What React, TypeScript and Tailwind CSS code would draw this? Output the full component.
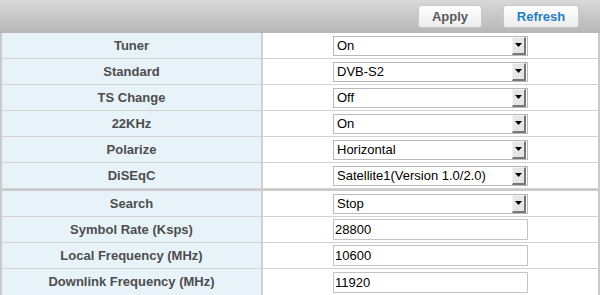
import React from 'react';

type Row = { label: string; value: string; kind: 'select' | 'input' };

const topRows: Row[] = [
  { label: 'Tuner', value: 'On', kind: 'select' },
  { label: 'Standard', value: 'DVB-S2', kind: 'select' },
  { label: 'TS Change', value: 'Off', kind: 'select' },
  { label: '22KHz', value: 'On', kind: 'select' },
  { label: 'Polarize', value: 'Horizontal', kind: 'select' },
  { label: 'DiSEqC', value: 'Satellite1(Version 1.0/2.0)', kind: 'select' },
];

const bottomRows: Row[] = [
  { label: 'Search', value: 'Stop', kind: 'select' },
  { label: 'Symbol Rate (Ksps)', value: '28800', kind: 'input' },
  { label: 'Local Frequency (MHz)', value: '10600', kind: 'input' },
  { label: 'Downlink Frequency (MHz)', value: '11920', kind: 'input' },
];

const FakeSelect: React.FC<{ value: string }> = ({ value }) => (
  <div className="flex h-[20px] w-[195px] items-center border border-[#b9b9b9] bg-white pl-[3px] pr-[1px]">
    <span className="flex-1 text-[13px] leading-none text-black">{value}</span>
    {/* dropdown arrow box */}
    <div className="flex h-[18px] w-[14px] items-center justify-center border-t border-l border-t-[#f4f4f4] border-l-[#f4f4f4] border-r-2 border-b-2 border-r-[#777] border-b-[#777] bg-[#e6e6e6]">
      <svg width="7" height="4" viewBox="0 0 7 4">
        <polygon points="0,0 7,0 3.5,4" fill="#000" />
      </svg>
    </div>
  </div>
);

const FakeInput: React.FC<{ value: string }> = ({ value }) => (
  <div className="flex h-[21px] w-[195px] items-center border border-[#c4c4c4] bg-white pl-[1px]">
    <span className="text-[13px] leading-none text-black">{value}</span>
  </div>
);

const TableRow: React.FC<{ row: Row; last?: boolean }> = ({ row, last }) => (
  <div className={`flex h-[26px] ${last ? '' : 'border-b border-[#d2d2d2]'}`}>
    <div className="flex w-[261px] items-center justify-center border-r-2 border-[#d2d2d2] bg-[#e8f3f9] text-[13px] font-bold text-[#4d4d4d]">
      {row.label}
    </div>
    <div className="flex flex-1 items-center bg-white pl-[70px]">
      {row.kind === 'select' ? <FakeSelect value={row.value} /> : <FakeInput value={row.value} />}
    </div>
  </div>
);

const App: React.FC = () => {
  return (
    <div className="h-[295px] w-[600px] overflow-hidden bg-white" style={{ fontFamily: '"Liberation Sans", Arial, sans-serif' }}>
      {/* Toolbar */}
      <div className="flex h-[33px] items-start justify-end gap-[21px] bg-gradient-to-b from-[#d9d9d9] to-[#b6b6b6] pr-[21px] pt-[5px]">
        <button className="h-[23px] w-[64px] rounded-[3px] border border-[#c8c8c8] bg-gradient-to-b from-white to-[#ececec] text-[13px] font-bold text-[#595959]">
          Apply
        </button>
        <button className="h-[23px] w-[76px] rounded-[3px] border border-[#c8c8c8] bg-gradient-to-b from-white to-[#ececec] text-[13px] font-bold text-[#1f7fc4]">
          Refresh
        </button>
      </div>

      {/* Settings table */}
      <div className="border-l-2 border-r-2 border-[#cacaca]">
        {topRows.map((r) => (
          <TableRow key={r.label} row={r} />
        ))}
        <div className="h-[2px] bg-[#cacaca]" />
        {bottomRows.map((r, i) => (
          <TableRow key={r.label} row={r} last={i === bottomRows.length - 1} />
        ))}
        <div className="h-[1px] bg-[#d2d2d2]" />
      </div>
    </div>
  );
};

export default App;
